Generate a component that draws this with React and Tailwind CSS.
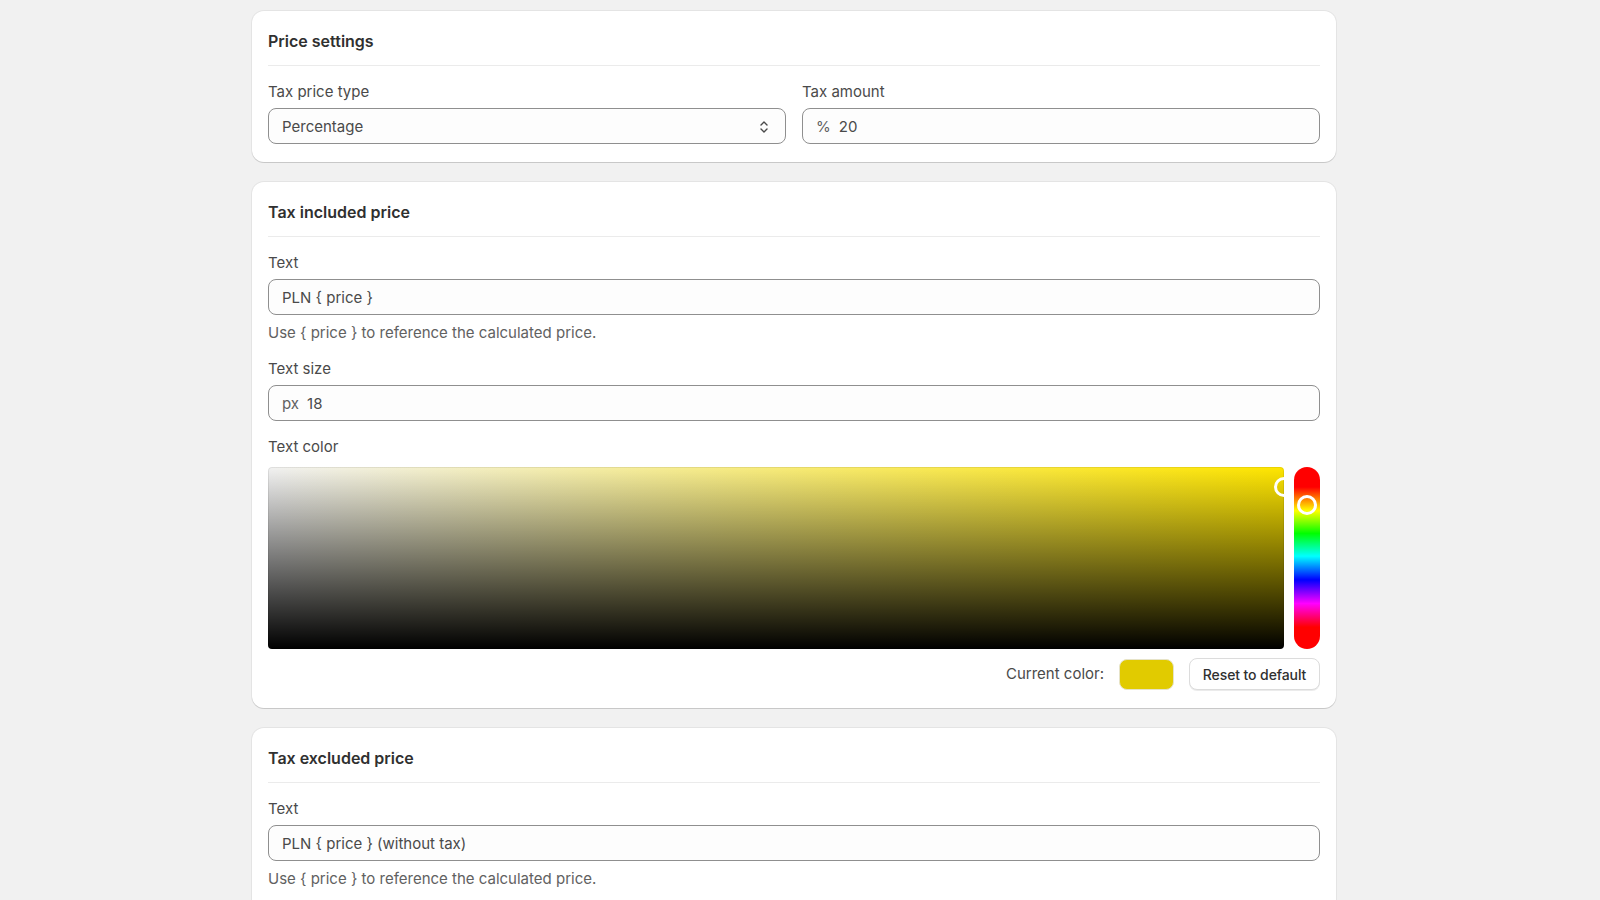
import React from "react";

const font = { fontFamily: "Inter, 'Noto Sans', sans-serif" };

function Card({ title, children }) {
  return (
    <div className="bg-white rounded-[12px] shadow-[0_1px_0_0_rgba(0,0,0,0.12),0_0_0_1px_rgba(0,0,0,0.05)] px-4 pt-5 pb-[18px]">
      <h2 className="text-[16px] leading-5 font-semibold text-[#303030]">{title}</h2>
      <div className="h-px bg-[#ebebeb] mt-[14px] mb-4" />
      {children}
    </div>
  );
}

function Label({ children }) {
  return <div className="text-[15px] leading-5 text-[#4a4a4a] mb-1.5">{children}</div>;
}

function Input({ prefix, value }) {
  return (
    <div className="h-9 rounded-[8px] border border-[#8f8f8f] bg-[#fdfdfd] flex items-center pl-[13px] pr-3 pt-[2px] text-[15px] text-[#4a4a4a]">
      {prefix && <span className="text-[#616161] mr-2">{prefix}</span>}
      <span>{value}</span>
    </div>
  );
}

function Help({ children }) {
  return <div className="text-[15px] leading-5 text-[#616161] mt-2">{children}</div>;
}

export default function App() {
  return (
    <div className="min-h-screen bg-[#f1f1f1] flex justify-center pr-3 pt-[11px]" style={font}>
      <div className="w-[1084px] flex flex-col gap-5">
        <Card title="Price settings">
          <div className="grid grid-cols-2 gap-4">
            <div>
              <Label>Tax price type</Label>
              <div className="h-9 rounded-[8px] border border-[#8f8f8f] bg-[#fdfdfd] flex items-center justify-between pl-[13px] pr-3 pt-[2px] text-[15px] text-[#4a4a4a]">
                <span>Percentage</span>
                <svg width="10" height="14" viewBox="0 0 10 14" fill="none" stroke="#4a4a4a" strokeWidth="1.4" strokeLinecap="round" strokeLinejoin="round" className="mr-[4px]">
                  <path d="M2 5 L5 2 L8 5" />
                  <path d="M2 9 L5 12 L8 9" />
                </svg>
              </div>
            </div>
            <div>
              <Label>Tax amount</Label>
              <Input prefix="%" value="20" />
            </div>
          </div>
        </Card>

        <Card title="Tax included price">
          <Label>Text</Label>
          <Input value="PLN { price }" />
          <Help>Use {"{ price }"} to reference the calculated price.</Help>
          <div className="mt-4">
            <Label>Text size</Label>
            <Input prefix="px" value="18" />
          </div>
          <div className="mt-4">
            <div className="text-[15px] leading-5 text-[#4a4a4a] mb-[10px]">Text color</div>
            <div className="flex gap-[10px] h-[182px]">
              <div className="relative flex-1 rounded-[4px] overflow-hidden bg-[#ffe600] bg-[linear-gradient(to_top,#000,rgba(0,0,0,0)),linear-gradient(to_right,#f2f2f2,rgba(255,255,255,0))] shadow-[inset_0_0_0_1px_rgba(0,0,0,0.08)]">
                <div className="absolute right-[-10px] top-[10px] w-5 h-5 rounded-full border-[3px] border-white" />
              </div>
              <div className="relative w-[26px] rounded-full bg-[linear-gradient(to_bottom,#f00_0%,#f00_11%,#ff0_24%,#0f0_36.5%,#0ff_49%,#00f_62%,#f0f_75%,#f00_88%,#f00_100%)]">
                <div className="absolute left-[3px] top-[28px] w-5 h-5 rounded-full border-[3px] border-white" />
              </div>
            </div>
            <div className="flex items-center justify-end mt-[9px] gap-[15px]">
              <span className="text-[15px] text-[#4a4a4a]">Current color:</span>
              <div className="w-[55px] h-[31px] rounded-[8px] bg-[#e1cb00] border border-[#e6e3c8]" />
              <button className="h-8 w-[131px] rounded-[8px] bg-white border border-[#dcdcdc] shadow-[0_1px_0_0_rgba(0,0,0,0.08)] text-[14px] font-medium text-[#303030] tracking-[-0.1px]">
                Reset to default
              </button>
            </div>
          </div>
        </Card>

        <Card title="Tax excluded price">
          <Label>Text</Label>
          <Input value="PLN { price } (without tax)" />
          <Help>Use {"{ price }"} to reference the calculated price.</Help>
          <div className="mt-4">
            <Label>Text size</Label>
            <Input prefix="px" value="14" />
          </div>
        </Card>
      </div>
    </div>
  );
}
